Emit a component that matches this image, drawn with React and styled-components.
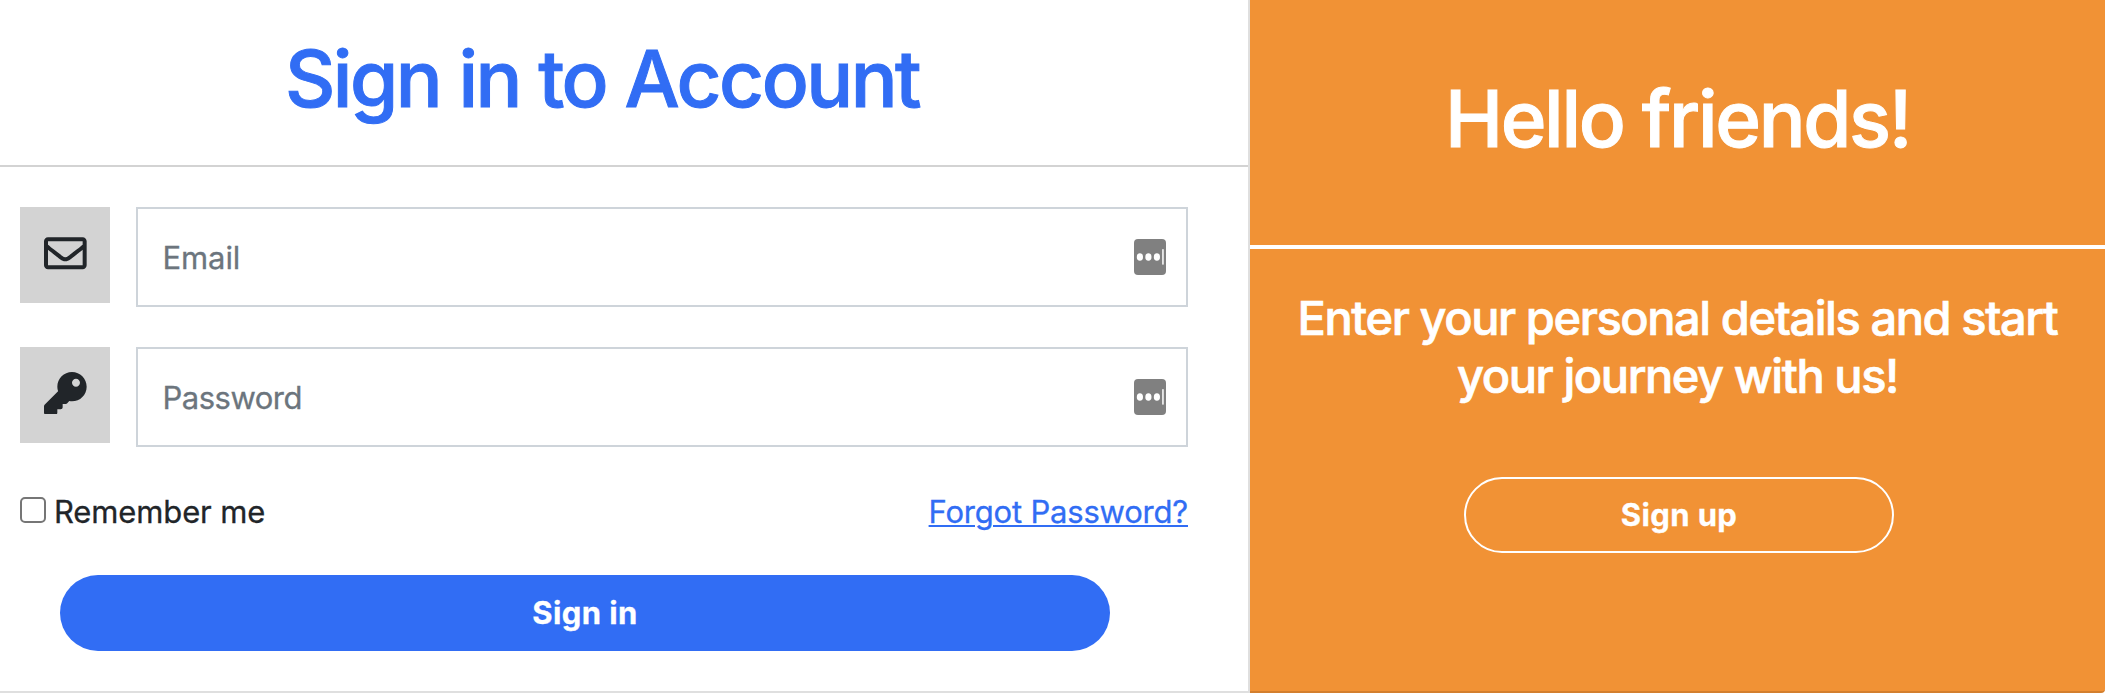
import React from 'react';
import styled, { createGlobalStyle } from 'styled-components';
import { FaRegEnvelope, FaKey } from 'react-icons/fa';

const GlobalStyle = createGlobalStyle`
  *, *::before, *::after { box-sizing: border-box; }
  body {
    margin: 0;
    background: #fff;
    color: #212529;
    font: 400 31px/48px Inter, "Liberation Sans", sans-serif;
    -webkit-text-stroke: 0.3px;
  }
`;

const Page = styled.main`
  display: flex;
  height: 693px;
`;

const SignInPanel = styled.section`
  width: 1250px;
  border-right: 2px solid #dfdfdf;
  border-bottom: 2px solid #dfdfdf;
`;

const Title = styled.h1`
  margin: 0;
  font-size: 78px;
  font-weight: 500;
  line-height: 96px;
  letter-spacing: ${(p) => p.$tracking};
  text-align: center;
  -webkit-text-stroke: 1px;
`;

const SignInHeader = styled.header`
  height: 167px;
  padding: 31px 64px 0 20px;
  border-bottom: 2px solid #d3d3d3;
  color: #316df4;
`;

const Form = styled.form`
  display: flex;
  flex-direction: column;
  padding: 40px 60px 0 20px;
`;

const Field = styled.label`
  display: flex;
  align-items: flex-start;
  gap: 26px;
  height: 100px;
  margin-bottom: 40px;
`;

const IconBox = styled.span`
  width: 90px;
  height: 96px;
  padding: 24.8px 0 0 24px;
  background: #d3d3d3;

  svg {
    display: block;
    width: 42.67px;
    height: 42.67px;
  }
`;

const InputFrame = styled.span`
  display: flex;
  flex: 1;
  align-items: center;
  height: 100px;
  padding: 0 20px 0 24.5px;
  border: 2px solid #ced4da;
`;

const Input = styled.input`
  flex: 1;
  height: 48px;
  padding: 1px 0 0;
  border: 0;
  outline: 0;
  background: transparent;
  font: inherit;
  letter-spacing: ${(p) => p.$tracking};

  &::placeholder {
    color: #6c757d;
    opacity: 1;
  }
`;

const ManagerBadge = styled.svg`
  width: 32px;
  height: 36px;
`;

const Options = styled.div`
  display: flex;
  justify-content: space-between;
  height: 48px;
  padding-top: 1px;
`;

const Remember = styled.label`
  display: flex;
  letter-spacing: -0.13px;
`;

const Checkbox = styled.input`
  appearance: none;
  width: 26px;
  height: 26px;
  margin: 9px 8px 0 0;
  border: 2px solid #767676;
  border-radius: 5px;
  background: #fff;
`;

const ForgotLink = styled.a`
  color: #316df4;
  letter-spacing: -0.2px;
  text-decoration: underline;
  text-decoration-thickness: 2px;
  text-underline-offset: 2px;
`;

const PillButton = styled.button`
  height: 76px;
  padding: 0;
  border-radius: 38px;
  font: inherit;
  font-weight: 700;
  letter-spacing: 0.4px;
  color: #fff;
`;

const SignInButton = styled(PillButton)`
  margin: 40px 78px 0 40px;
  border: 0;
  background: #316df4;
`;

const WelcomePanel = styled.aside`
  display: flex;
  flex-direction: column;
  flex: 1;
  border-bottom: 2px solid #d37f2e;
  border-bottom-right-radius: 4px;
  background: #f19235;
  color: #fff;
`;

const WelcomeHeader = styled.header`
  height: 249px;
  padding-top: 71px;
  border-bottom: 4px solid #fff;
`;

const Message = styled.h4`
  margin: 40px 0 0;
  font-size: 47px;
  font-weight: 500;
  line-height: 57.6px;
  letter-spacing: -1.43px;
  text-align: center;
  -webkit-text-stroke: 0.7px;
`;

const SignUpButton = styled(PillButton)`
  width: 430px;
  margin: 73px 0 0 214px;
  border: 2px solid #fff;
  background: transparent;
`;

function PasswordManagerBadge() {
  return (
    <ManagerBadge viewBox="0 0 32 36" aria-hidden="true">
      <rect width="32" height="36" rx="4" fill="#808080" />
      <g fill="#fff">
        <ellipse cx="5.9" cy="18" rx="3.1" ry="3.8" />
        <ellipse cx="14.4" cy="18" rx="3.1" ry="3.8" />
        <ellipse cx="22.9" cy="18" rx="3.1" ry="3.8" />
        <rect x="28.2" y="10.2" width="1.5" height="15.4" />
      </g>
    </ManagerBadge>
  );
}

function IconField({ icon: Icon, type, placeholder, tracking }) {
  return (
    <Field>
      <IconBox><Icon /></IconBox>
      <InputFrame>
        <Input type={type} placeholder={placeholder} $tracking={tracking} />
        <PasswordManagerBadge />
      </InputFrame>
    </Field>
  );
}

export default function App() {
  return (
    <>
      <GlobalStyle />
      <Page>
        <SignInPanel>
          <SignInHeader>
            <Title $tracking="-2.51px">Sign in to Account</Title>
          </SignInHeader>
          <Form>
            <IconField icon={FaRegEnvelope} type="email" placeholder="Email" tracking="-0.1px" />
            <IconField icon={FaKey} type="password" placeholder="Password" tracking="-0.5px" />
            <Options>
              <Remember>
                <Checkbox type="checkbox" />
                Remember me
              </Remember>
              <ForgotLink href="#">Forgot Password?</ForgotLink>
            </Options>
            <SignInButton type="button">Sign in</SignInButton>
          </Form>
        </SignInPanel>
        <WelcomePanel>
          <WelcomeHeader>
            <Title $tracking="-2.36px">Hello friends!</Title>
          </WelcomeHeader>
          <Message>
            Enter your personal details and start
            <br />
            your journey with us!
          </Message>
          <SignUpButton type="button">Sign up</SignUpButton>
        </WelcomePanel>
      </Page>
    </>
  );
}
